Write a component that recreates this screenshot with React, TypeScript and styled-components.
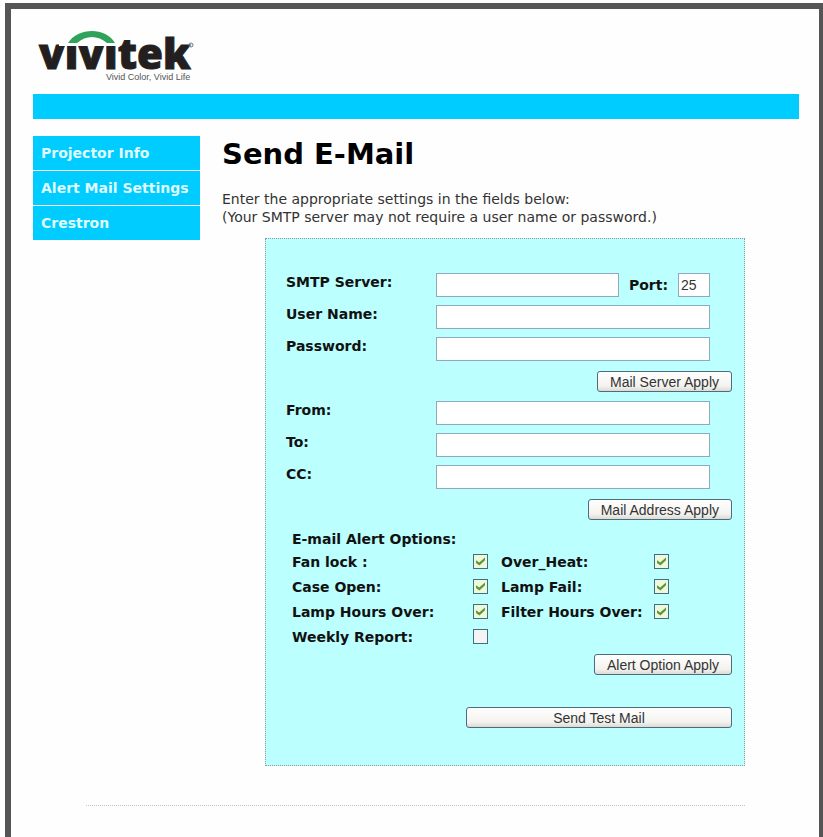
import React from "react";
import styled, { createGlobalStyle } from "styled-components";

const SANS = `"DejaVu Sans", Verdana, sans-serif`;
const UI = `"Liberation Sans", Arial, sans-serif`;

const GlobalStyle = createGlobalStyle`
  *, *::before, *::after { box-sizing: border-box; }
  body { margin: 0; background: #fefefe; color: #111; font-family: ${SANS}; font-size: 14px; }
`;

const Frame = styled.div`
  min-height: calc(100vh - 3px);
  margin: 3px 0 0 5px;
  border: 6px solid #555;
  border-right-width: 4px;
  border-bottom: 0;
  padding: 20px 20px 24px 22px;
`;

const Header = styled.header`
  border-bottom: 25px solid #0cf;
`;

const Logo = styled.svg`
  display: block;
  width: 168px;
  height: 65px;
  overflow: visible;
`;

const Columns = styled.div`
  display: flex;
  align-items: flex-start;
  gap: 22px;
  margin-top: 17px;
`;

const Nav = styled.nav`
  flex: 0 0 167px;
  display: flex;
  flex-direction: column;
  gap: 1px;
`;

const NavLink = styled.a`
  padding: 0 8px;
  background: #0cf;
  color: #dffaff;
  font-weight: bold;
  line-height: 34px;
  text-decoration: none;
  white-space: nowrap;
`;

const Main = styled.main`
  flex: 1;
  min-width: 0;
`;

const Title = styled.h1`
  margin: 0;
  color: #000;
  font-size: 29px;
  line-height: 36px;
`;

const Intro = styled.p`
  margin: 18px 0 12px;
  color: #333;
  line-height: 18px;
`;

const Form = styled.form`
  margin: 0 54px 0 43px;
  padding: 34px 12px 37px 20px;
  border: 1px dotted #8a9a9a;
  background: #bff;
`;

const Row = styled.div`
  display: flex;
  align-items: flex-start;
  height: 32px;
  padding-right: 22px;
`;

const Label = styled.label`
  flex: 0 0 150px;
  font-weight: bold;
  line-height: 18px;
`;

const PortLabel = styled.label`
  margin: 0 10px;
  font-weight: bold;
  line-height: 24px;
`;

const TextInput = styled.input<{ $small?: boolean }>`
  flex: ${(p) => (p.$small ? "0 0 32px" : "1")};
  min-width: 0;
  height: 24px;
  padding: 0 2px;
  border: 1px solid #8fa9bd;
  border-radius: 0;
  background: #fff;
  color: #333;
  font: 14px ${UI};
`;

const Actions = styled.div<{ $spaced?: boolean }>`
  display: flex;
  justify-content: flex-end;
  margin-top: ${(p) => (p.$spaced ? "32px" : "0")};
`;

const ButtonSlot = styled(Actions)`
  height: 32px;
  padding-top: 2px;
`;

const Button = styled.button<{ $wide?: boolean }>`
  width: ${(p) => (p.$wide ? "266px" : "auto")};
  height: 21px;
  padding: 0 12px;
  border: 1px solid #4d6b7c;
  border-radius: 3px;
  background: linear-gradient(#fff, #f3f2ee 75%, #dcdad4);
  color: #333;
  font: 14px ${UI};
  line-height: 18px;
  white-space: nowrap;
`;

const Options = styled.fieldset`
  margin: 0 0 5px 6px;
  padding: 0;
  border: 0;
  font-weight: bold;
`;

const OptionsTitle = styled.legend`
  padding: 0;
  line-height: 20px;
`;

const OptionGrid = styled.div`
  display: grid;
  grid-template-columns: 181px 28px 153px 28px;
  grid-auto-rows: 25px;
  align-items: center;
  white-space: nowrap;
`;

const Checkbox = styled.input`
  appearance: none;
  display: grid;
  place-items: center;
  width: 15px;
  height: 15px;
  margin: 0;
  border: 1px solid #3f6f80;
  background: #f4f4f4;

  &:checked { background: #eef8dc; }
  &:checked::before {
    content: "";
    width: 9px;
    height: 9px;
    background: #5f9638;
    clip-path: polygon(0 35%, 35% 60%, 100% 5%, 100% 35%, 38% 95%, 0 68%);
  }
`;

const Divider = styled.hr`
  margin: 39px 54px 0 53px;
  border: 0;
  border-top: 1px dotted #c4c4c4;
`;

const navItems = ["Projector Info", "Alert Mail Settings", "Crestron"];

const options = [
  { id: "fan", text: "Fan lock :", on: true },
  { id: "heat", text: "Over_Heat:", on: true },
  { id: "case", text: "Case Open:", on: true },
  { id: "lamp", text: "Lamp Fail:", on: true },
  { id: "lampHours", text: "Lamp Hours Over:", on: true },
  { id: "filterHours", text: "Filter Hours Over:", on: true },
  { id: "weekly", text: "Weekly Report:", on: false },
];

function Field({ id, label, type = "text" }: { id: string; label: string; type?: string }) {
  return (
    <Row>
      <Label htmlFor={id}>{label}</Label>
      <TextInput id={id} type={type} />
    </Row>
  );
}

function VivitekLogo() {
  return (
    <Logo viewBox="0 0 168 65" role="img" aria-label="vivitek, Vivid Color, Vivid Life">
      <text x="6" y="40" fontFamily="Open Sans" fontWeight="800" fontSize="42" fill="#231f20" stroke="#231f20" strokeWidth="1">vivitek</text>
      <rect x="26" y="0" width="58" height="17" fill="#fefefe" />
      <path d="M35 14C45-2 73-2 82 14H74C65 6 53 6 44 14Z" fill="#2fa35c" />
      <circle cx="158" cy="16" r="2" fill="none" stroke="#777" />
      <text x="73" y="51" fontFamily="Liberation Sans" fontSize="9" fill="#555">Vivid Color, Vivid Life</text>
    </Logo>
  );
}

export default function App() {
  return (
    <>
      <GlobalStyle />
      <Frame>
        <Header>
          <VivitekLogo />
        </Header>
        <Columns>
          <Nav>
            {navItems.map((item) => (
              <NavLink key={item} href="#">{item}</NavLink>
            ))}
          </Nav>
          <Main>
            <Title>Send E-Mail</Title>
            <Intro>
              Enter the appropriate settings in the fields below:
              <br />
              (Your SMTP server may not require a user name or password.)
            </Intro>
            <Form onSubmit={(e) => e.preventDefault()}>
              <Row>
                <Label htmlFor="smtp">SMTP Server:</Label>
                <TextInput id="smtp" type="text" />
                <PortLabel htmlFor="port">Port:</PortLabel>
                <TextInput id="port" type="text" defaultValue="25" $small />
              </Row>
              <Field id="user" label="User Name:" />
              <Field id="password" label="Password:" type="password" />
              <ButtonSlot><Button type="button">Mail Server Apply</Button></ButtonSlot>
              <Field id="from" label="From:" />
              <Field id="to" label="To:" />
              <Field id="cc" label="CC:" />
              <ButtonSlot><Button type="button">Mail Address Apply</Button></ButtonSlot>
              <Options>
                <OptionsTitle>E-mail Alert Options:</OptionsTitle>
                <OptionGrid>
                  {options.map((o) => (
                    <React.Fragment key={o.id}>
                      <label htmlFor={o.id}>{o.text}</label>
                      <Checkbox id={o.id} type="checkbox" defaultChecked={o.on} />
                    </React.Fragment>
                  ))}
                </OptionGrid>
              </Options>
              <Actions><Button type="button">Alert Option Apply</Button></Actions>
              <Actions $spaced><Button type="submit" $wide>Send Test Mail</Button></Actions>
            </Form>
          </Main>
        </Columns>
        <Divider />
      </Frame>
    </>
  );
}
